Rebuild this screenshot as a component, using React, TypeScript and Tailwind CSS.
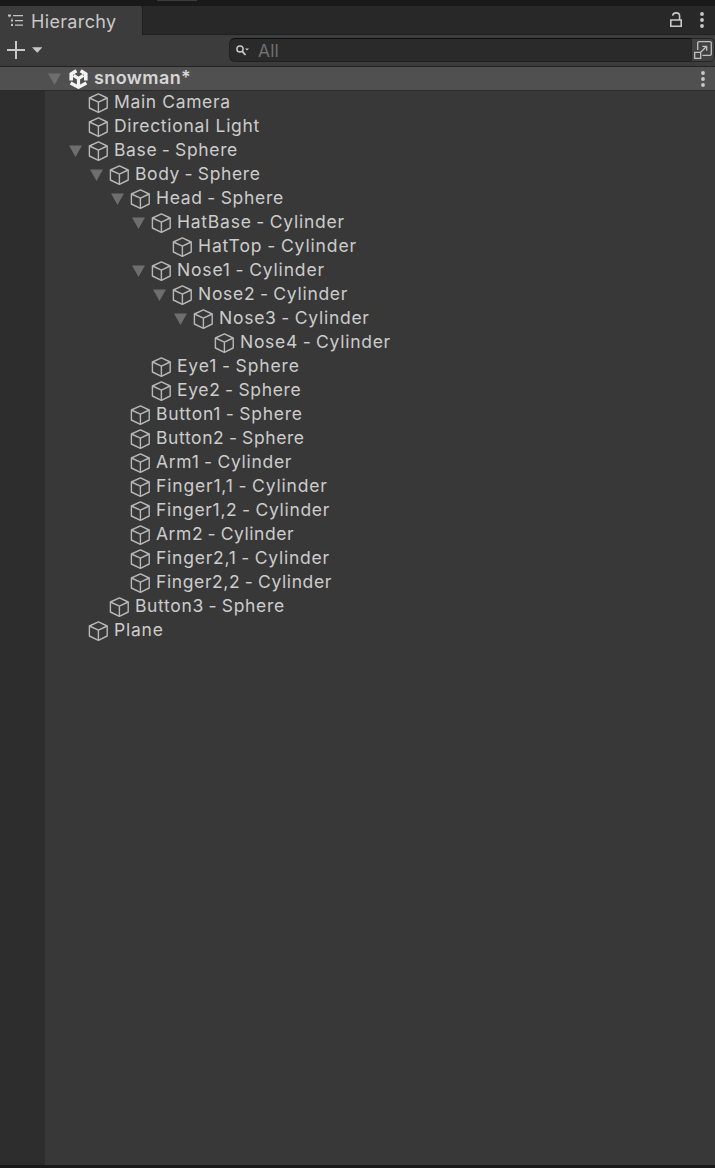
import React from "react";

type Item = { name: string; depth: number; open?: boolean; tracking: string };

const items: Item[] = [
  { name: "Main Camera", depth: 0, tracking: "tracking-[0.63px]" },
  { name: "Directional Light", depth: 0, tracking: "tracking-[0.7px]" },
  { name: "Base - Sphere", depth: 0, open: true, tracking: "tracking-[0.64px] [word-spacing:-1px]" },
  { name: "Body - Sphere", depth: 1, open: true, tracking: "tracking-[0.62px] [word-spacing:-1px]" },
  { name: "Head - Sphere", depth: 2, open: true, tracking: "tracking-[0.69px] [word-spacing:-1px]" },
  { name: "HatBase - Cylinder", depth: 3, open: true, tracking: "tracking-[0.76px] [word-spacing:-1px]" },
  { name: "HatTop - Cylinder", depth: 4, tracking: "tracking-[0.88px] [word-spacing:-1px]" },
  { name: "Nose1 - Cylinder", depth: 3, open: true, tracking: "tracking-[0.83px] [word-spacing:-1px]" },
  { name: "Nose2 - Cylinder", depth: 4, open: true, tracking: "tracking-[0.71px] [word-spacing:-1px]" },
  { name: "Nose3 - Cylinder", depth: 5, open: true, tracking: "tracking-[0.74px] [word-spacing:-1px]" },
  { name: "Nose4 - Cylinder", depth: 6, tracking: "tracking-[0.72px] [word-spacing:-1px]" },
  { name: "Eye1 - Sphere", depth: 3, tracking: "tracking-[0.85px] [word-spacing:-1px]" },
  { name: "Eye2 - Sphere", depth: 3, tracking: "tracking-[0.66px] [word-spacing:-1px]" },
  { name: "Button1 - Sphere", depth: 2, tracking: "tracking-[0.75px] [word-spacing:-1px]" },
  { name: "Button2 - Sphere", depth: 2, tracking: "tracking-[0.6px] [word-spacing:-1px]" },
  { name: "Arm1 - Cylinder", depth: 2, tracking: "tracking-[0.7px] [word-spacing:-1px]" },
  { name: "Finger1,1 - Cylinder", depth: 2, tracking: "tracking-[0.83px] [word-spacing:-1px]" },
  { name: "Finger1,2 - Cylinder", depth: 2, tracking: "tracking-[0.69px] [word-spacing:-1px]" },
  { name: "Arm2 - Cylinder", depth: 2, tracking: "tracking-[0.55px] [word-spacing:-1px]" },
  { name: "Finger2,1 - Cylinder", depth: 2, tracking: "tracking-[0.76px] [word-spacing:-1px]" },
  { name: "Finger2,2 - Cylinder", depth: 2, tracking: "tracking-[0.61px] [word-spacing:-1px]" },
  { name: "Button3 - Sphere", depth: 1, tracking: "tracking-[0.66px] [word-spacing:-1px]" },
  { name: "Plane", depth: 0, tracking: "tracking-[0.78px]" },
];

const indents = ["pl-0", "pl-[21px]", "pl-[42px]", "pl-[63px]", "pl-[84px]", "pl-[105px]", "pl-[126px]"];

function Arrow() {
  return (
    <svg className="h-3 w-[13px]" viewBox="0 0 13 12" fill="#6e6e6e">
      <path d="M0 0.5H13L6.5 12Z" />
    </svg>
  );
}

function Cube() {
  return (
    <svg className="h-5 w-5 shrink-0" viewBox="0 0 20 20" fill="none" stroke="#b8b8b8" strokeWidth="1.4" strokeLinejoin="round">
      <path d="M10.4 0.9L19.2 5V15L10.4 19.3L1.4 15V5Z" />
      <path d="M1.4 5L10.4 9.2L19.2 5M10.4 9.2V19.3" />
    </svg>
  );
}

function UnityLogo() {
  return (
    <svg className="ml-2 h-5 w-[19px] shrink-0" viewBox="0 0 19 20" fill="none" stroke="#f4f4f4">
      <path d="M7.4 1.8L2.2 5V11.4M11.6 1.8L16.8 5V11.4" strokeWidth="3.6" />
      <path d="M1.6 14L9.5 18.2L17.4 14" strokeWidth="3.4" />
      <path d="M4.6 6.4L9.5 9.6L14.4 6.4M9.5 9.4V18" strokeWidth="3.2" />
    </svg>
  );
}

function Dots() {
  return (
    <svg className="h-4 w-1" viewBox="0 0 4 16" fill="#c8c8c8">
      <circle cx="2" cy="2" r="1.9" />
      <circle cx="2" cy="8" r="1.9" />
      <circle cx="2" cy="14" r="1.9" />
    </svg>
  );
}

function TabBar() {
  return (
    <div className="flex h-[29px] bg-[#282828]">
      <div className="flex w-[142px] items-center rounded-tr-[3px] bg-[#3c3c3c] pl-2">
        <svg className="-mt-[1px] h-[13px] w-4" viewBox="0 0 16 13" fill="#c4c4c4">
          <path d="M0 0.5H3V2.5H0ZM5 1H15V2.2H5ZM3 5.5H5V7.5H3ZM7 6H15V7.2H7ZM3 10H5V12H3ZM7 10.5H15V11.7H7Z" />
          <path d="M1 2H2V3.5H1ZM3.5 4H4.5V5H3.5ZM3.5 8.5H4.5V9.5H3.5Z" opacity=".5" />
        </svg>
        <span className="ml-[7px] mt-[3px] text-[18px] leading-6 tracking-[0.34px] text-[#c8c8c8]">Hierarchy</span>
      </div>
      <div className="flex flex-1 justify-end border-b border-l border-[#202020] pr-[11px] pt-[6px]">
        <svg className="mr-[18px] h-[15px] w-3" viewBox="0 0 12 15" fill="none" stroke="#c8c8c8" strokeWidth="1.6">
          <path d="M0.8 8H11.2V14.2H0.8Z" />
          <path d="M2.6 3.6C3 1.6 4 0.9 6.2 0.9C8.9 0.9 9.6 2.2 9.6 4V8" />
        </svg>
        <Dots />
      </div>
    </div>
  );
}

function Toolbar() {
  return (
    <div className="flex h-[32px] border-b border-[#232323] bg-[#3c3c3c] pt-[3px]">
      <svg className="ml-[7px] mt-[3px] h-[18px] w-[18px]" viewBox="0 0 18 18" stroke="#c8c8c8" strokeWidth="2">
        <path d="M0 9H18M9 0V18" />
      </svg>
      <svg className="ml-[6.5px] mt-[9px] h-[6px] w-[10.5px]" viewBox="0 0 11 6" fill="#c8c8c8">
        <path d="M0 0H11L5.5 6Z" />
      </svg>
      <div className="ml-[187px] flex h-6 flex-1 items-center rounded-l-[6px] border border-r-0 border-[#212121] border-t-[#0d0d0d] bg-[#2a2a2a] pl-[6px]">
        <svg className="h-[11px] w-[13px]" viewBox="0 0 13 11" fill="none" stroke="#c8c8c8">
          <circle cx="4" cy="4" r="3.1" strokeWidth="1.5" />
          <path d="M6.3 6.3L9.5 10" strokeWidth="1.8" />
          <path d="M9 3.5H13L11 5.6Z" fill="#c8c8c8" stroke="none" />
        </svg>
        <span className="ml-[9px] mt-[1px] text-[17.5px] leading-6 tracking-[0.1px] text-[#707070]">All</span>
      </div>
      <div className="flex h-6 w-6 items-center justify-center rounded-r-[5px] border border-[#242424] bg-[#414141]">
        <svg className="h-[18px] w-[18px] shrink-0" viewBox="0 0 18 18" fill="none" stroke="#c0c0c0" strokeWidth="1.3">
          <path d="M3.7 9V2C3.7 1 4.2 0.7 5 0.7H16C17 0.7 17.3 1 17.3 2V13C17.3 14 17 14.3 16 14.3H8.5" />
          <path d="M0.7 11.3H6.7V17.3H0.7ZM6.7 11.3L12.7 5.3M8.3 5.3H12.7V9.7" />
        </svg>
      </div>
    </div>
  );
}

function SceneRow() {
  return (
    <div className="flex h-6 items-center border-b border-[#2a2a2a] bg-[#505050] pl-12 pr-[10px]">
      <Arrow />
      <UnityLogo />
      <span className="-mt-[1px] ml-[6px] flex-1 text-[18px] font-semibold leading-6 tracking-[0.4px] text-[#d6d6d6]">snowman*</span>
      <Dots />
    </div>
  );
}

function Row({ item }: { item: Item }) {
  return (
    <div className={`flex h-6 items-center ${indents[item.depth]}`}>
      <div className="mt-[1px] ml-6 w-[19px]">{item.open && <Arrow />}</div>
      <div className="mt-[1px] flex"><Cube /></div>
      <span className={`ml-[6px] whitespace-nowrap text-[17.5px] leading-6 text-[#cccccc] ${item.tracking}`}>{item.name}</span>
    </div>
  );
}

export default function App() {
  return (
    <div className="flex h-[1168px] w-[715px] flex-col overflow-hidden bg-[#383838] font-['Inter',sans-serif]">
      <div className="h-[6px] bg-[#191919] pl-[157px]">
        <div className="h-[1px] w-10 bg-[#3c3c3c]" />
      </div>
      <TabBar />
      <Toolbar />
      <SceneRow />
      <div className="flex flex-1">
        <div className="w-[45px] bg-[#2d2d2d]" />
        <div className="-mt-[1px] flex-1">
          {items.map((item) => <Row key={item.name} item={item} />)}
        </div>
      </div>
      <div className="h-[3px] bg-[#191919]" />
    </div>
  );
}
